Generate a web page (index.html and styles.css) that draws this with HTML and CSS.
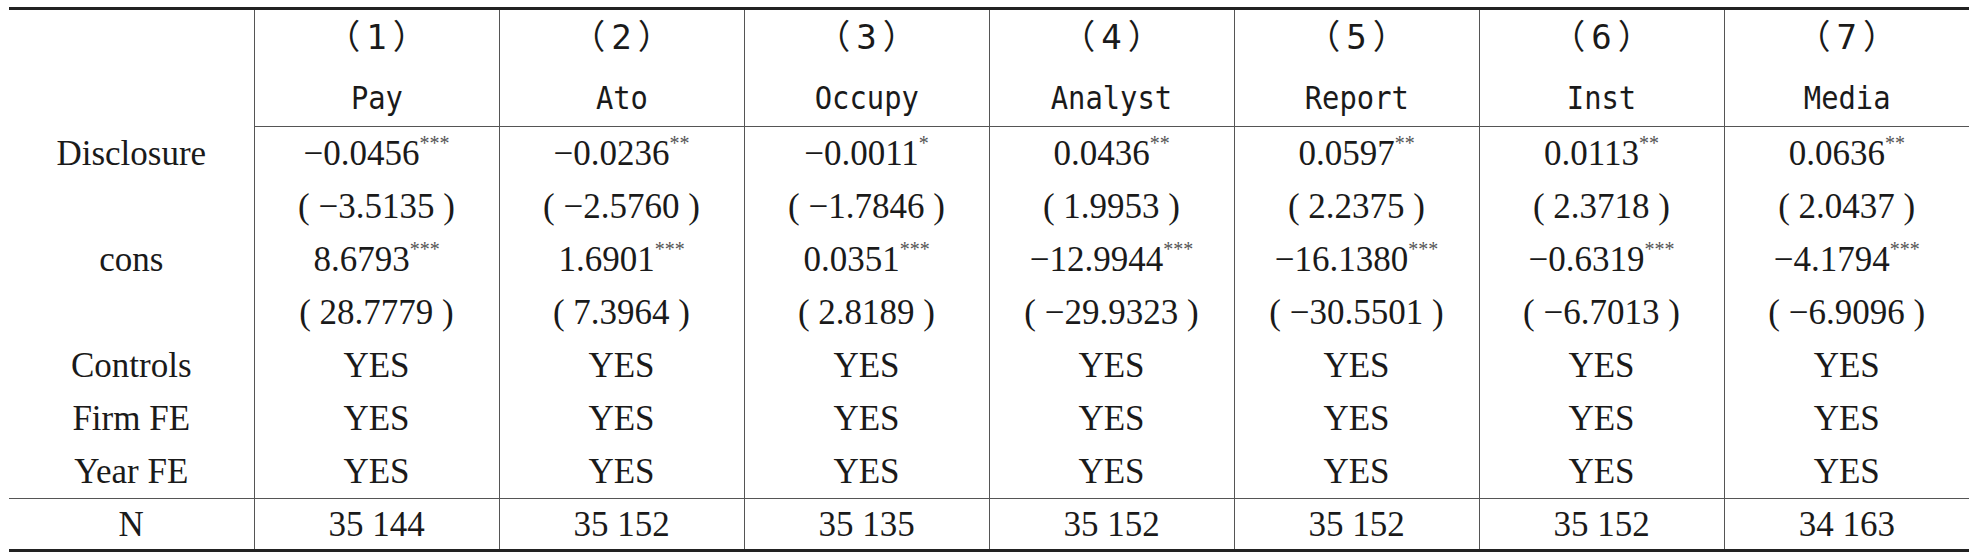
FILE: index.html
```html
<!DOCTYPE html>
<html lang="zh">
<head>
  <title>回归结果</title>
  <meta charset="UTF-8">
  <link rel="stylesheet" href="styles.css">
</head>
<body>
<table class="results">
  <colgroup>
    <col><col><col><col><col><col><col><col>
  </colgroup>
  <thead>
    <tr class="head-num">
      <th rowspan="2"></th>
      <th><span class="mono">（1）</span></th>
      <th><span class="mono">（2）</span></th>
      <th><span class="mono">（3）</span></th>
      <th><span class="mono">（4）</span></th>
      <th><span class="mono">（5）</span></th>
      <th><span class="mono">（6）</span></th>
      <th><span class="mono">（7）</span></th>
    </tr>
    <tr class="head-name">
      <th><span class="mono">Pay</span></th>
      <th><span class="mono">Ato</span></th>
      <th><span class="mono">Occupy</span></th>
      <th><span class="mono">Analyst</span></th>
      <th><span class="mono">Report</span></th>
      <th><span class="mono">Inst</span></th>
      <th><span class="mono">Media</span></th>
    </tr>
  </thead>
  <tbody>
    <tr>
      <td>Disclosure</td>
      <td>−0.0456<span class="sig">***</span></td>
      <td>−0.0236<span class="sig">**</span></td>
      <td>−0.0011<span class="sig">*</span></td>
      <td>0.0436<span class="sig">**</span></td>
      <td>0.0597<span class="sig">**</span></td>
      <td>0.0113<span class="sig">**</span></td>
      <td>0.0636<span class="sig">**</span></td>
    </tr>
    <tr>
      <td></td>
      <td>( −3.5135 )</td>
      <td>( −2.5760 )</td>
      <td>( −1.7846 )</td>
      <td>( 1.9953 )</td>
      <td>( 2.2375 )</td>
      <td>( 2.3718 )</td>
      <td>( 2.0437 )</td>
    </tr>
    <tr>
      <td>cons</td>
      <td>8.6793<span class="sig">***</span></td>
      <td>1.6901<span class="sig">***</span></td>
      <td>0.0351<span class="sig">***</span></td>
      <td>−12.9944<span class="sig">***</span></td>
      <td>−16.1380<span class="sig">***</span></td>
      <td>−0.6319<span class="sig">***</span></td>
      <td>−4.1794<span class="sig">***</span></td>
    </tr>
    <tr>
      <td></td>
      <td>( 28.7779 )</td>
      <td>( 7.3964 )</td>
      <td>( 2.8189 )</td>
      <td>( −29.9323 )</td>
      <td>( −30.5501 )</td>
      <td>( −6.7013 )</td>
      <td>( −6.9096 )</td>
    </tr>
    <tr>
      <td>Controls</td>
      <td>YES</td><td>YES</td><td>YES</td><td>YES</td><td>YES</td><td>YES</td><td>YES</td>
    </tr>
    <tr>
      <td>Firm FE</td>
      <td>YES</td><td>YES</td><td>YES</td><td>YES</td><td>YES</td><td>YES</td><td>YES</td>
    </tr>
    <tr>
      <td>Year FE</td>
      <td>YES</td><td>YES</td><td>YES</td><td>YES</td><td>YES</td><td>YES</td><td>YES</td>
    </tr>
  </tbody>
  <tfoot>
    <tr class="total">
      <td>N</td>
      <td>35 144</td>
      <td>35 152</td>
      <td>35 135</td>
      <td>35 152</td>
      <td>35 152</td>
      <td>35 152</td>
      <td>34 163</td>
    </tr>
  </tfoot>
</table>
</body>
</html>
```

FILE: styles.css
```css
body {
  margin: 0;
  background: #fff;
  color: #1a1a1a;
  font-family: "Liberation Serif", "Times New Roman", serif;
}

.results {
  width: 1960px;
  margin: 7px 0 0 9px;
  border-collapse: collapse;
  table-layout: fixed;
  font-size: 35px;
  border-top: 3px solid #222;
  border-bottom: 3px solid #222;
}

.results col {
  width: 245px;
}

.results th,
.results td {
  padding: 0;
  text-align: center;
  vertical-align: middle;
  font-weight: normal;
  line-height: 1;
  white-space: nowrap;
}

.results th + th,
.results td + td,
.head-name th {
  border-left: 1px solid #555;
}

.head-num th {
  height: 54px;
  padding-bottom: 4px;
}

.head-name th {
  height: 58px;
  border-bottom: 1px solid #555;
}

.results tbody td {
  height: 53px;
}

.total td {
  height: 50px;
  border-top: 1px solid #555;
}

.mono {
  display: inline-block;
  font-family: "DejaVu Sans Mono", "Noto Sans CJK SC", monospace;
  font-size: 32px;
  transform: scaleX(0.9);
}

.head-num .mono {
  font-size: 34px;
  letter-spacing: 6px;
  margin-right: -6px;
  transform: none;
}

.sig {
  font-size: 20px;
  color: #555;
  vertical-align: 15px;
  line-height: 0;
}
```
